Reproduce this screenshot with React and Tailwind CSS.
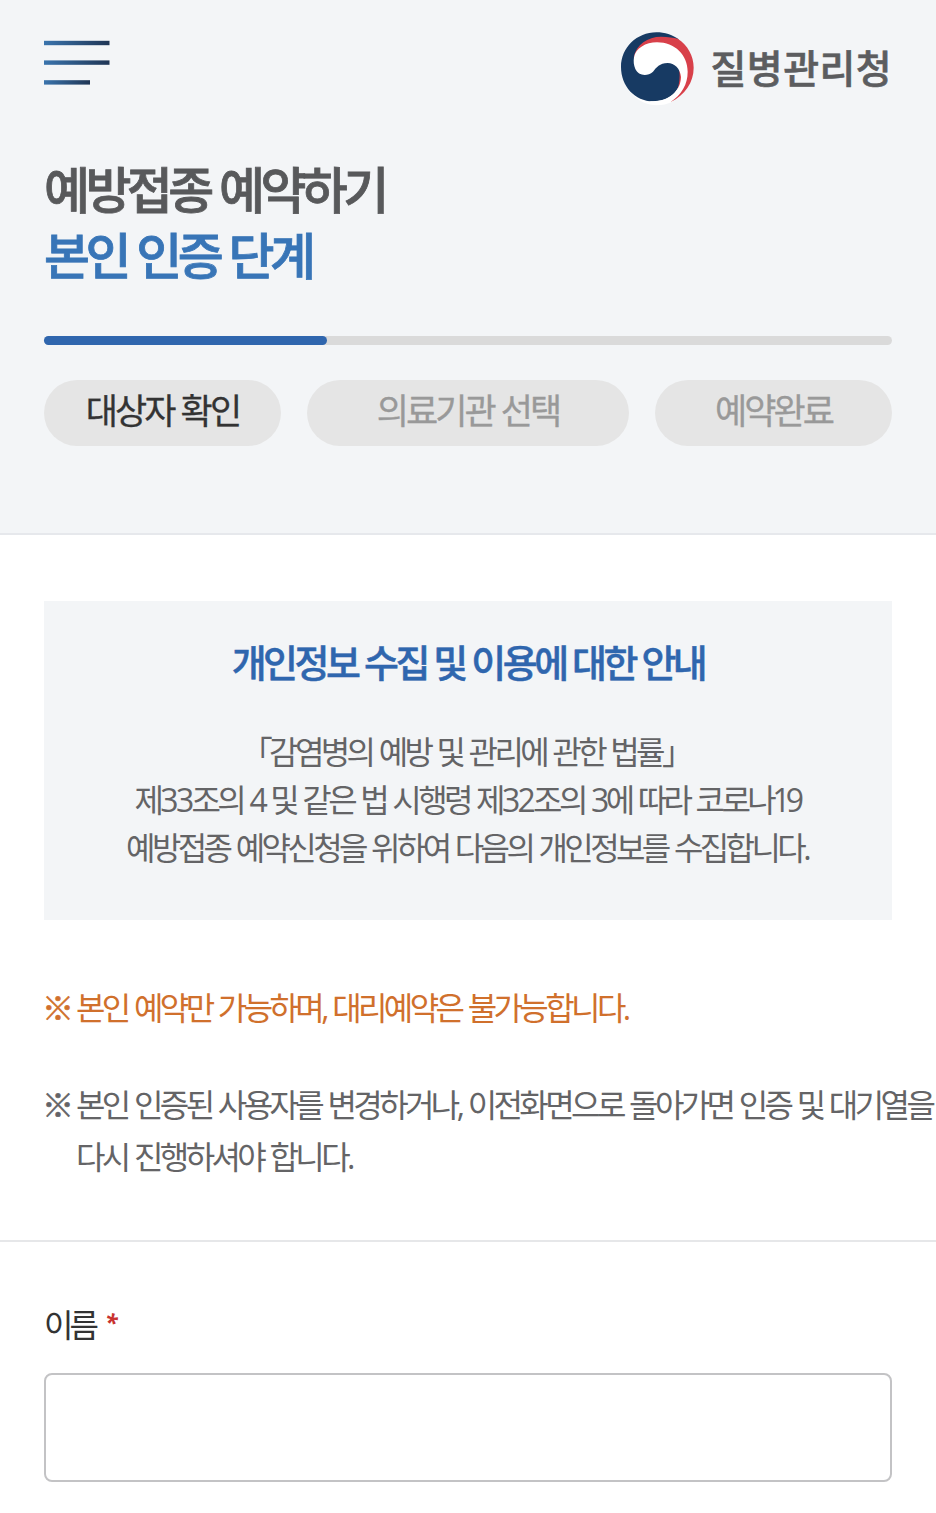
function MenuIcon() {
  return (
    <svg className="mt-10 h-[46px] w-[66px]" viewBox="0 0 66 46">
      <defs>
        <linearGradient id="menuLong" gradientUnits="userSpaceOnUse" x1="0" y1="0" x2="66" y2="0">
          <stop offset="0" stopColor="#3a74ad" />
          <stop offset="1" stopColor="#1f3554" />
        </linearGradient>
        <linearGradient id="menuShort" gradientUnits="userSpaceOnUse" x1="0" y1="0" x2="46" y2="0">
          <stop offset="0" stopColor="#3a74ad" />
          <stop offset="1" stopColor="#1f3554" />
        </linearGradient>
      </defs>
      <rect x="0" y="0.8" width="65.5" height="4.4" fill="url(#menuLong)" />
      <rect x="0" y="20.4" width="65.5" height="4.4" fill="url(#menuLong)" />
      <rect x="0" y="40.2" width="46" height="4.4" fill="url(#menuShort)" />
    </svg>
  );
}

function Emblem() {
  return (
    <svg className="h-[76px] w-[76px]" viewBox="15 15 228 228">
      <path d="M50 205C80 242 130 250 172 230L220 180L150 170Z" fill="#fff" />
      <path d="M18 126C18 68 66 22 124 22C150 22 172 30 190 42L210 130L198 154C198 198 162 229 114 229C60 229 18 184 18 126Z" fill="#173a63" />
      <path d="M56 98C64 58 98 35 138 35C160 35 176 38 188 41C218 60 236 92 236 128C236 172 210 210 167 231C190 205 200 160 190 120C160 70 100 50 56 98Z" fill="#d8404a" />
      <path d="M57 97C62 70 92 52 126 52C180 52 218 90 218 140C218 178 200 208 167 231C148 238 124 238 100 228C156 234 197 202 198 156C196 130 178 114 158 114C134 114 124 128 114 140C96 156 70 152 61 132C56 120 55 110 57 97Z" fill="#fff" />
    </svg>
  );
}

function Step({ label, className }) {
  return (
    <li className={"flex h-[66px] items-center justify-center rounded-full bg-[#e5e5e5] pb-[9px] text-[35px] leading-[48px] tracking-[-2.9px] [word-spacing:2px] [-webkit-text-stroke:0.3px] " + className}>
      {label}
    </li>
  );
}

export default function App() {
  return (
    <div className="h-[1513px] w-[936px] overflow-hidden whitespace-nowrap bg-white font-['Noto_Sans_CJK_KR',sans-serif] text-[32px] text-[#646466]">
      <header className="h-[535px] border-b-2 border-[#e6e8ec] bg-[#f3f5f7] px-11">
        <div className="flex h-[154px] items-start justify-between">
          <MenuIcon />
          <div className="flex items-center gap-[15px] pt-[30px]">
            <Emblem />
            <span className="-mt-[5px] text-[39px] font-medium leading-[60px] tracking-[0.4px] text-[#5c5d5f] [-webkit-text-stroke:0.6px]">질병관리청</span>
          </div>
        </div>
        <h1 className="text-[50px] font-medium leading-[66px] tracking-[-4.6px] [word-spacing:2.8px] [-webkit-text-stroke:0.8px]">
          <span className="block text-[#58595b]">예방접종 예약하기</span>
          <span className="block text-[#3875b7]">본인 인증 단계</span>
        </h1>
        <div className="mt-[50px] h-[9px] rounded-full bg-[#dadada]">
          <div className="h-full w-1/3 rounded-full bg-[#2f66ae]" />
        </div>
        <ol className="mt-[35px] flex justify-between">
          <Step label="대상자 확인" className="w-[237px] text-[#333]" />
          <Step label="의료기관 선택" className="w-[322px] text-[#999]" />
          <Step label="예약완료" className="w-[237px] text-[#999]" />
        </ol>
      </header>

      <main>
        <section className="mx-11 mt-[66px] h-[319px] bg-[#f3f5f7] pt-[36px] text-center">
          <h2 className="text-[38px] font-medium leading-[48px] tracking-[-3.5px] text-[#2f66ae] [word-spacing:1.4px] [-webkit-text-stroke:0.5px]">
            개인정보 수집 및 이용에 대한 안내
          </h2>
          <p className="mt-[43px] font-['Open_Sans','Noto_Sans_CJK_KR',sans-serif] leading-[48px] tracking-[-3.6px] [word-spacing:1.5px]">
            <span className="block pr-[5px]">
              <span className="[font-feature-settings:'halt']">「</span>감염병의 예방 및 관리에 관한 법률
              <span className="[font-feature-settings:'halt']">」</span>
            </span>
            <span className="block pr-[2px]">
              제<span className="tracking-[-2.7px]">33</span>조의 4 및 같은 법 시행령 제<span className="tracking-[-2.7px]">32</span>조의 3에 따라 코로나<span className="-ml-[1px] tracking-[-4.6px]">19</span>
            </span>
            <span className="block pr-[2px]">예방접종 예약신청을 위하여 다음의 개인정보를 수집합니다.</span>
          </p>
        </section>

        <ul className="mt-[62px] flex flex-col gap-[45px] pl-11 font-['Open_Sans','Noto_Sans_CJK_KR',sans-serif] leading-[52px] tracking-[-3.6px] [word-spacing:1.6px]">
          <li className="flex text-[#d0702c]">
            <span className="-ml-[2px] w-[34px] shrink-0 [-webkit-text-stroke:0.6px]">※</span>
            <span>본인 예약만 가능하며, 대리예약은 불가능합니다.</span>
          </li>
          <li className="flex">
            <span className="-ml-[2px] w-[34px] shrink-0 [-webkit-text-stroke:0.6px]">※</span>
            <span>
              본인 인증된 사용자를 변경하거나, 이전화면으로 돌아가면 인증 및 대기열을
              <br />
              다시 진행하셔야 합니다.
            </span>
          </li>
        </ul>

        <form className="mt-[57px] border-t-2 border-[#e6e7e9] px-11 pt-[57px]">
          <label htmlFor="name" className="flex leading-[48px] tracking-[-4px] text-[#333]">
            이름
            <span className="-mt-[1px] ml-[10px] font-['Open_Sans',sans-serif] text-[23px] font-bold italic leading-[48px] text-[#c8322f]">*</span>
          </label>
          <input id="name" type="text" className="mt-[26px] block h-[109px] w-full rounded-[8px] border-2 border-[#c3c3c5] bg-white px-6 outline-none" />
        </form>
      </main>
    </div>
  );
}
